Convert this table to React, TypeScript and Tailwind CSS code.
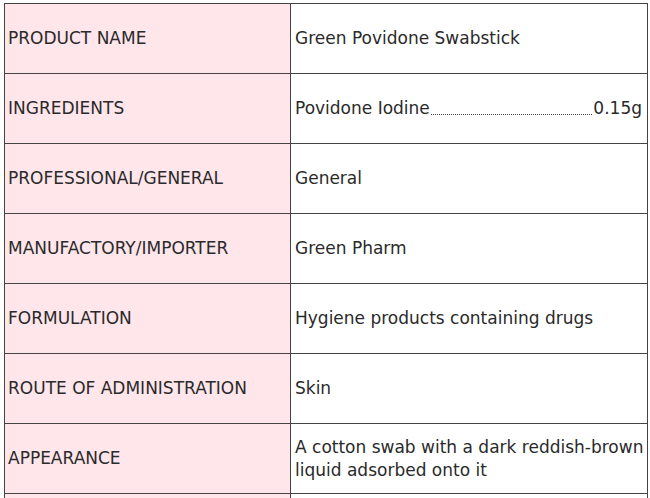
const rows: { label: string; value: React.ReactNode }[] = [
  { label: "PRODUCT NAME", value: "Green Povidone Swabstick" },
  {
    label: "INGREDIENTS",
    value: (
      <div className="flex items-baseline pr-[4px]">
        <span className="whitespace-nowrap">Povidone Iodine</span>
        <span className="flex-1 self-end mb-[5px] mx-[1px] border-b border-dotted border-[#444]" />
        <span className="whitespace-nowrap">0.15g</span>
      </div>
    ),
  },
  { label: "PROFESSIONAL/GENERAL", value: "General" },
  { label: "MANUFACTORY/IMPORTER", value: "Green Pharm" },
  { label: "FORMULATION", value: "Hygiene products containing drugs" },
  { label: "ROUTE OF ADMINISTRATION", value: "Skin" },
  {
    label: "APPEARANCE",
    value: "A cotton swab with a dark reddish-brown liquid adsorbed onto it",
  },
  { label: "", value: "" },
];

export default function App() {
  return (
    <div
      className="w-[650px] h-[498px] overflow-hidden bg-white pt-[3px] pl-[4px]"
      style={{ fontFamily: '"DejaVu Sans", "Noto Sans", sans-serif' }}
    >
      <div className="w-[644px] border-t border-l border-[#444] text-[17px] leading-[23px] text-[#2a2a2a]">
        {rows.map((row, i) => (
          <div key={i} className="flex h-[70px] border-b border-[#444]">
            <div className="w-[286px] shrink-0 flex items-center bg-[#ffe6ea] border-r border-[#444] pl-[3px]">
              {row.label}
            </div>
            <div className="flex-1 min-w-0 flex items-center border-r border-[#444] pl-[4px] pr-[1px]">
              <div className="w-full">{row.value}</div>
            </div>
          </div>
        ))}
      </div>
    </div>
  );
}
